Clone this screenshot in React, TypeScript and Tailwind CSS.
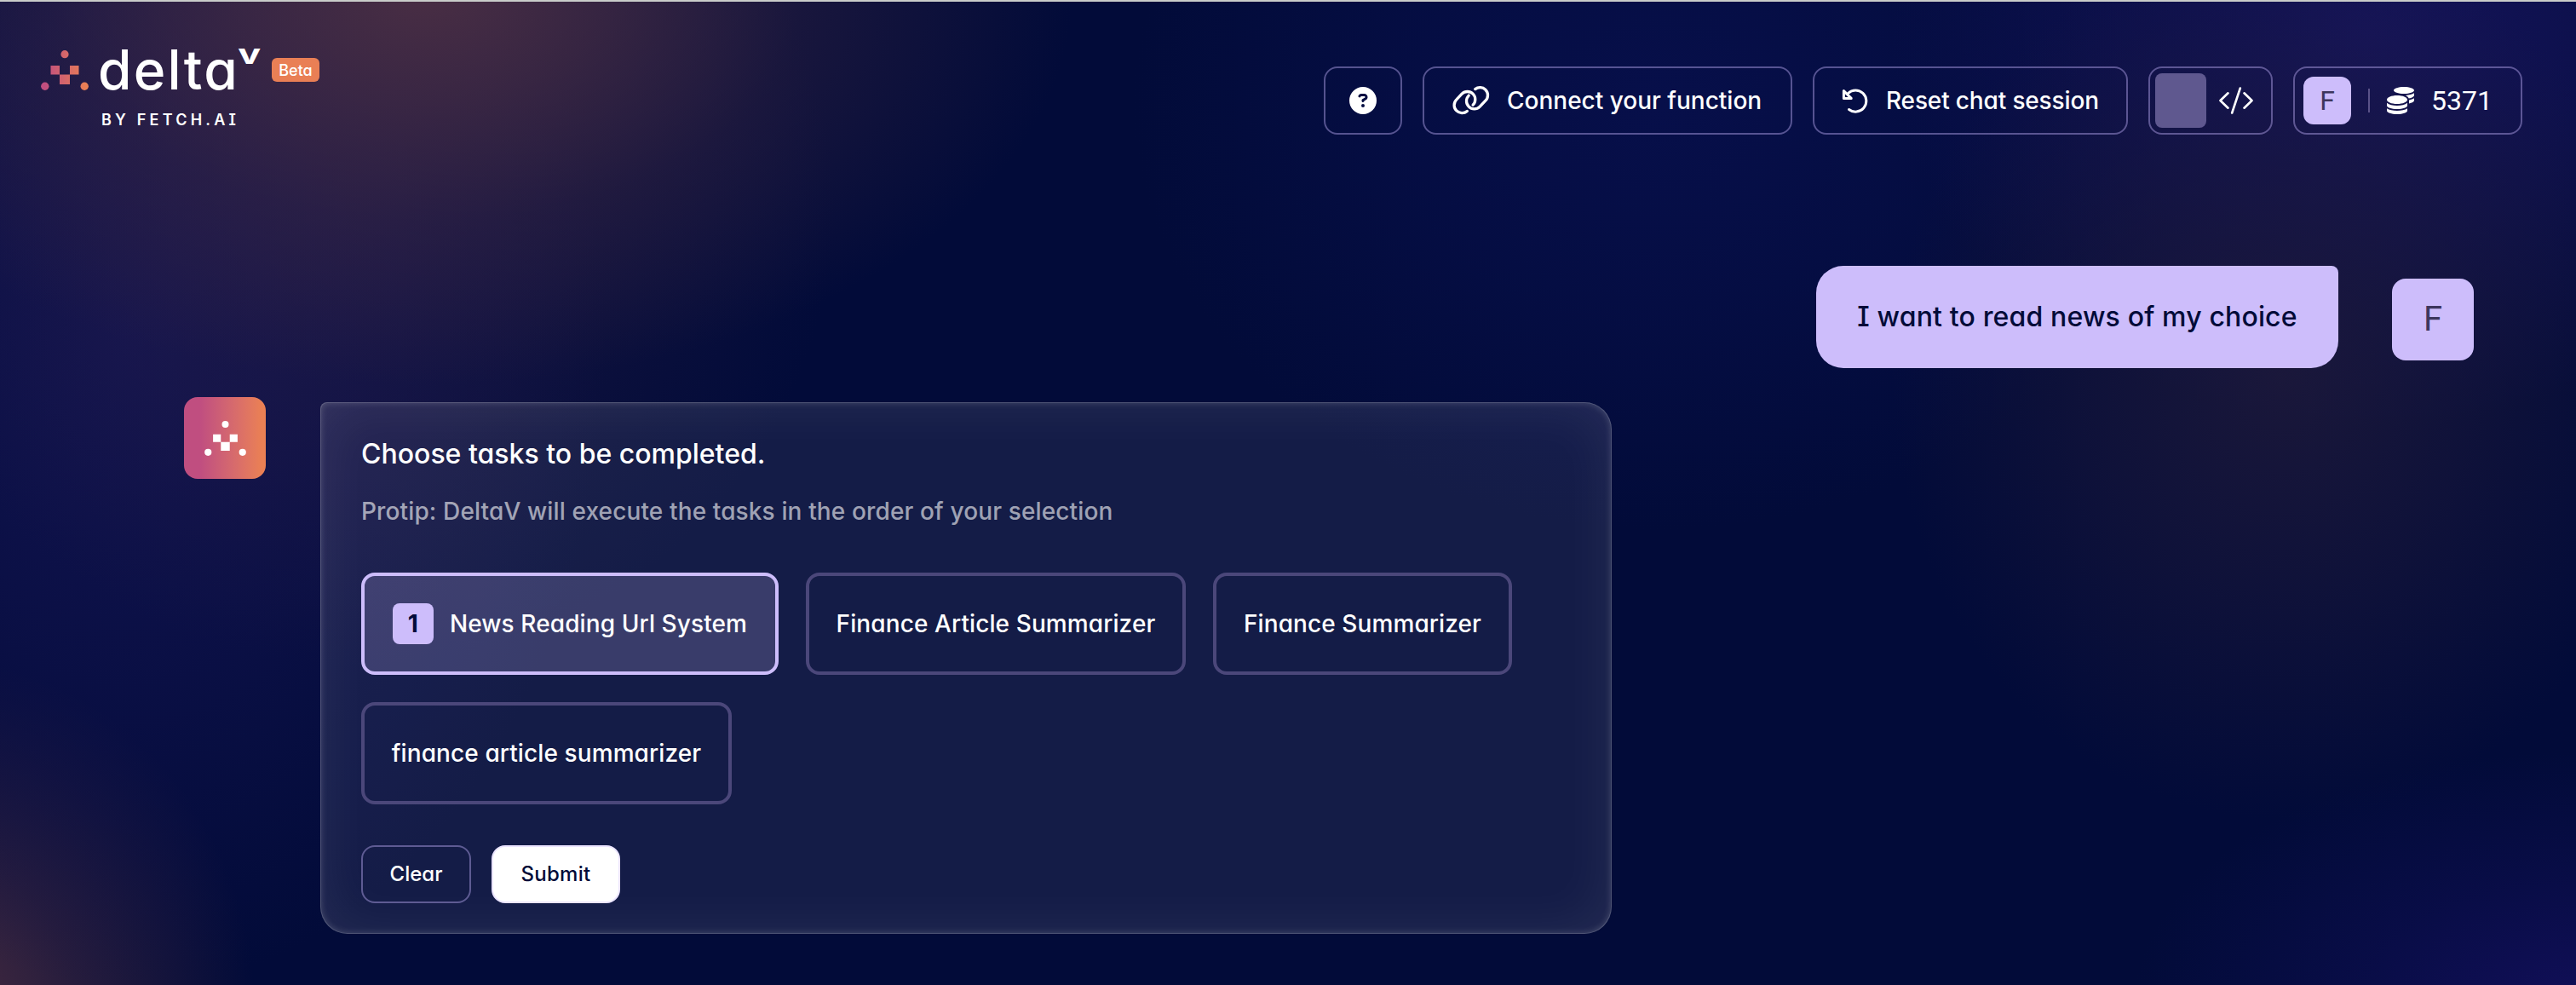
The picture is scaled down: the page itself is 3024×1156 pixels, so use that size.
import type { ReactNode } from "react";
import { FaCoins } from "react-icons/fa";
import { FaCircleQuestion } from "react-icons/fa6";

function NavBox({ className, children }: { className: string; children: ReactNode }) {
  return (
    <div className={`flex h-20 shrink-0 items-center rounded-2xl border-2 border-[#b9a8f0]/45 ${className}`}>
      {children}
    </div>
  );
}

function LinkIcon() {
  return (
    <svg className="h-[46px] w-[54px]" viewBox="0 0 54 46" fill="none" stroke="currentColor" strokeWidth="3.3" strokeLinecap="round" strokeLinejoin="round">
      <path d="M22.3 35.4 A9.2 9.2 0 0 1 9.8 34.9 A9.2 9.2 0 0 1 9.8 21.9 L16.1 15.2 A9.2 9.2 0 0 1 29.1 15.2 A9.2 9.2 0 0 1 29.1 28.2" />
      <path d="M31.7 9.6 A9.2 9.2 0 0 1 43.8 10.2 A9.2 9.2 0 0 1 43.8 23.2 L37.2 30.1 A9.2 9.2 0 0 1 24.2 30.1 A9.2 9.2 0 0 1 24.2 17.1" />
    </svg>
  );
}

function ResetIcon() {
  return (
    <svg className="h-8 w-8" viewBox="0 0 32 32" fill="none" stroke="currentColor" strokeWidth="3" strokeLinecap="round" strokeLinejoin="round">
      <path d="M8.5 26.5 A12.6 12.6 0 1 0 7.5 7.5" />
      <path d="M2.4 4.6 V13.4 H11.2 Z" />
    </svg>
  );
}

function CodeIcon() {
  return (
    <svg className="h-8 w-10" viewBox="0 0 40 32" fill="none" stroke="currentColor" strokeWidth="2.6" strokeLinecap="round" strokeLinejoin="round">
      <path d="M10.5 7.3 L1.5 16 L10.5 24.7 M29.5 7.3 L38.5 16 L29.5 24.7 M24.8 1.5 L15.2 30.5" />
    </svg>
  );
}

function DeltaMark({ className, gradient }: { className: string; gradient?: boolean }) {
  return (
    <svg className={className} viewBox="0 0 56 47" fill={gradient ? "url(#mark)" : "white"}>
      <defs>
        <linearGradient id="mark" gradientUnits="userSpaceOnUse" x1="0" y1="0" x2="56" y2="0">
          <stop offset="0.08" stopColor="#c04e80" />
          <stop offset="0.95" stopColor="#ea8054" />
        </linearGradient>
      </defs>
      <circle cx="28" cy="4.7" r="4.6" />
      <circle cx="4.8" cy="42.2" r="4.7" />
      <circle cx="51.2" cy="42.2" r="4.7" />
      <path d="M11.5 18 h10.5 v10.5 h-10.5z M34 18 h10.5 v10.5 h-10.5z M22 28.5 h12 v11.5 h-12z" />
    </svg>
  );
}

function Logo() {
  return (
    <div className="ml-12 mt-12 text-white">
      <div className="flex items-start">
        <DeltaMark className="mt-[9px] h-[47px] w-14" gradient />
        <span className="ml-[11px] h-[64px] w-[163px] whitespace-nowrap text-[64px] font-medium leading-[64px] tracking-[2.2px]">
          delta
        </span>
        <span className="-mt-0.5 flex w-[30px] justify-center text-[32px] font-bold leading-[32px]">
          <span className="inline-block scale-x-140">v</span>
        </span>
        <span className="ml-[11px] mt-[18px] flex h-7 w-14 items-center justify-center rounded-md bg-[#e97f55] text-[18px] font-medium">
          Beta
        </span>
      </div>
      <div className="ml-[71px] mt-[15px] text-[18px] font-semibold leading-6 tracking-[4.2px]">BY FETCH.AI</div>
    </div>
  );
}

function Header() {
  return (
    <header className="flex h-[310px] items-start justify-between pr-[63px]">
      <Logo />
      <nav className="mt-[76px] flex gap-6 text-[28px] font-medium text-white">
        <NavBox className="w-[92px] justify-center">
          <FaCircleQuestion className="h-8 w-8" />
        </NavBox>
        <NavBox className="w-[434px] pl-7">
          <LinkIcon />
          <span className="ml-[15px]">Connect your function</span>
        </NavBox>
        <NavBox className="w-[370px] pl-8">
          <ResetIcon />
          <span className="ml-5 tracking-[-0.15px]">Reset chat session</span>
        </NavBox>
        <NavBox className="w-[146px] pl-1.5">
          <div className="h-16 w-[60px] rounded-lg bg-[#5f588f]" />
          <span className="ml-[15px]">
            <CodeIcon />
          </span>
        </NavBox>
        <NavBox className="w-[269px] pl-2.5">
          <div className="flex h-14 w-14 items-center justify-center rounded-xl bg-[#cdbdfb] font-['Roboto'] text-[32px] font-normal text-[#3d365c]">
            F
          </div>
          <div className="ml-5 h-7 w-0.5 bg-[#5a5288]" />
          <FaCoins className="ml-5 h-8 w-8" />
          <span className="ml-5 font-['Roboto'] text-[32px] font-normal">5371</span>
        </NavBox>
      </nav>
    </header>
  );
}

function Option({ label, className, order }: { label: string; className: string; order?: number }) {
  return (
    <div
      className={`flex h-[120px] items-center justify-center rounded-2xl border-4 ${
        order ? "border-[#cdbdfb] bg-[#cdbdfb]/20" : "border-[#4b477a]"
      } ${className}`}
    >
      {order && (
        <span className="mr-[19px] flex h-12 w-12 items-center justify-center rounded-lg bg-[#cdbdfb] font-bold text-[#020b38]">
          {order}
        </span>
      )}
      <span className="whitespace-nowrap">{label}</span>
    </div>
  );
}

export default function App() {
  return (
    <div className="h-[1156px] w-[3024px] overflow-hidden border-t-2 border-[#c9ccca] bg-[#020b39] bg-[radial-gradient(ellipse_760px_460px_at_500px_-10px,#492e44_0%,#492e44b0_28%,#492e4450_58%,transparent_100%),radial-gradient(ellipse_560px_540px_at_420px_240px,#30224870_0%,#30224840_50%,transparent_100%),radial-gradient(ellipse_560px_760px_at_150px_400px,#11134e_0%,#11134e90_50%,transparent_100%),radial-gradient(ellipse_380px_420px_at_-80px_1190px,#4a2d40_0%,#4a2d4080_45%,transparent_100%),radial-gradient(ellipse_460px_520px_at_2680px_440px,#1f1a3ad0_0%,#1f1a3a70_50%,transparent_100%),radial-gradient(ellipse_560px_460px_at_2780px_40px,#15145a_0%,#15145a90_50%,transparent_100%),radial-gradient(ellipse_620px_500px_at_1950px_120px,#070f4a_0%,#070f4a90_50%,transparent_100%),radial-gradient(ellipse_520px_300px_at_3024px_1180px,#110f58_0%,#110f5870_50%,transparent_100%)] font-['Inter',sans-serif] [font-feature-settings:'cv11','cv08']">
      <Header />
      <main>
        <div className="flex h-[154px] items-start justify-end pr-[120px]">
          <div className="flex h-[120px] w-[613px] items-center justify-center rounded-[32px] rounded-tr-lg bg-[#cdbdfb] text-[32px] font-medium tracking-[0.15px] text-[#020b38]">
            I want to read news of my choice
          </div>
          <div className="ml-[63px] mt-[15px] flex h-24 w-24 items-center justify-center rounded-2xl bg-[#cdbdfb] font-['Roboto'] text-[40px] text-[#3d365c]">
            F
          </div>
        </div>
        <div className="flex items-start gap-16 pl-[216px]">
          <div className="flex h-24 w-24 items-center justify-center rounded-2xl bg-linear-to-r from-[#c04e80] from-20% to-[#ea8054] to-95%">
            <DeltaMark className="h-[41px] w-[49px]" />
          </div>
          <section className="mt-1.5 h-[624px] w-[1516px] rounded-[32px] rounded-tl-lg bg-white/7 px-12 pt-[37px] text-[28px] font-medium text-white shadow-[inset_0_0_0_1px_rgba(255,255,255,0.13),inset_0_0_8px_rgba(255,255,255,0.22),inset_0_0_68px_rgba(255,255,255,0.08)]">
            <h1 className="text-[32px] leading-[48px]">Choose tasks to be completed.</h1>
            <p className="mt-[19px] leading-[48px] tracking-[0.13px] text-white/60">
              Protip: DeltaV will execute the tasks in the order of your selection
            </p>
            <div className="mt-12 flex flex-wrap gap-8 tracking-[0.1px]">
              <Option className="w-[490px]" label="News Reading Url System" order={1} />
              <Option className="w-[446px]" label="Finance Article Summarizer" />
              <Option className="w-[351px]" label="Finance Summarizer" />
              <Option className="w-[435px]" label="finance article summarizer" />
            </div>
            <div className="mt-12 flex gap-6 text-2xl">
              <button className="h-[68px] w-[129px] rounded-2xl border-2 border-[#b9a8f0]/45">Clear</button>
              <button className="h-[68px] w-[151px] rounded-2xl border-2 border-[#ebe4ff] bg-white tracking-[0.3px] text-[#020b38]">
                Submit
              </button>
            </div>
          </section>
        </div>
      </main>
    </div>
  );
}
